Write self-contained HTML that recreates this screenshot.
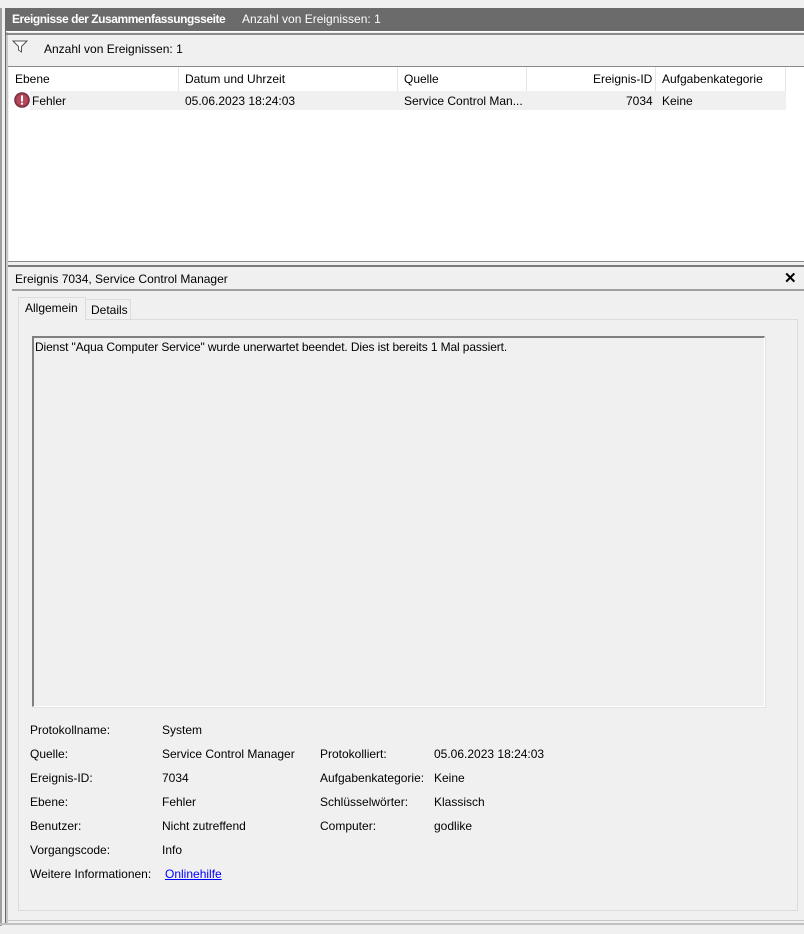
<!DOCTYPE html>
<html><head><meta charset="utf-8"><style>
*{margin:0;padding:0;box-sizing:border-box}
body{width:804px;height:934px;background:#f0f0f0;font-family:"Liberation Sans",sans-serif;font-size:12px;color:#000;position:relative;overflow:hidden}
.a{position:absolute;white-space:nowrap}
</style></head><body>
<div class="a" style="left:0;top:8px;width:2px;height:918px;background:#a0a0a0"></div>
<div class="a" style="left:5px;top:8px;width:1px;height:915px;background:#696969"></div>
<div class="a" style="left:6px;top:8px;width:2px;height:915px;background:#c8c8c8"></div>
<div class="a" style="left:6px;top:8px;width:798px;height:23px;background:#6b6b6b"></div>
<div class="a" style="left:12px;top:12px;color:#fff;font-weight:bold;font-size:12px;letter-spacing:-0.45px">Ereignisse der Zusammenfassungsseite</div>
<div class="a" style="left:242px;top:12px;color:#fff;font-size:12px">Anzahl von Ereignissen: 1</div>
<div class="a" style="left:6px;top:31px;width:798px;height:1px;background:#fff"></div>
<div class="a" style="left:6px;top:33px;width:798px;height:2px;background:#8a8a8a"></div>
<svg class="a" style="left:12px;top:40px" width="16" height="13" viewBox="0 0 16 13"><path d="M1 1H15L9.5 6.5V12L6.5 10V6.5Z" fill="#fff" stroke="#555" stroke-width="1"/></svg>
<div class="a" style="left:44px;top:42px">Anzahl von Ereignissen: 1</div>
<div class="a" style="left:8px;top:66px;width:796px;height:1px;background:#8a8a8a"></div>
<div class="a" style="left:9px;top:67px;width:795px;height:194px;background:#fff"></div>
<div class="a" style="left:178px;top:67px;width:1px;height:24px;background:#e5e5e5"></div>
<div class="a" style="left:397px;top:67px;width:1px;height:24px;background:#e5e5e5"></div>
<div class="a" style="left:526px;top:67px;width:1px;height:24px;background:#e5e5e5"></div>
<div class="a" style="left:655px;top:67px;width:1px;height:24px;background:#e5e5e5"></div>
<div class="a" style="left:785px;top:67px;width:1px;height:24px;background:#e5e5e5"></div>
<div class="a" style="left:15px;top:72px">Ebene</div>
<div class="a" style="left:185px;top:72px">Datum und Uhrzeit</div>
<div class="a" style="left:404px;top:72px">Quelle</div>
<div class="a" style="left:593px;top:72px">Ereignis-ID</div>
<div class="a" style="left:662px;top:72px">Aufgabenkategorie</div>
<div class="a" style="left:30px;top:91px;width:756px;height:19px;background:#f0f0f0"></div>
<svg class="a" style="left:14px;top:92px" width="16" height="16" viewBox="0 0 16 16"><circle cx="8" cy="8" r="7.3" fill="#9a3a4c" stroke="#6d2a3a" stroke-width="1"/><circle cx="8" cy="8" r="5.5" fill="#b8485c"/><rect x="7" y="3.5" width="2" height="6" fill="#fff"/><rect x="7" y="10.7" width="2" height="2" fill="#fff"/></svg>
<div class="a" style="left:32px;top:94px">Fehler</div>
<div class="a" style="left:185px;top:94px">05.06.2023 18:24:03</div>
<div class="a" style="left:404px;top:94px">Service Control Man...</div>
<div class="a" style="left:626px;top:94px">7034</div>
<div class="a" style="left:662px;top:94px">Keine</div>
<div class="a" style="left:8px;top:261px;width:796px;height:1px;background:#8a8a8a"></div>
<div class="a" style="left:8px;top:265px;width:796px;height:2px;background:#7a7a7a"></div>
<div class="a" style="left:15px;top:272px">Ereignis 7034, Service Control Manager</div>
<div class="a" style="left:784px;top:269px;font-weight:bold;font-size:15px">✕</div>
<div class="a" style="left:12px;top:289px;width:792px;height:2px;background:#a0a0a0"></div>
<div class="a" style="left:18px;top:319px;width:780px;height:592px;border:1px solid #dcdcdc;background:#f0f0f0"></div>
<div class="a" style="left:18px;top:297px;width:68px;height:23px;background:#f0f0f0;border:1px solid #dcdcdc;border-bottom:none"></div>
<div class="a" style="left:25px;top:301px">Allgemein</div>
<div class="a" style="left:86px;top:299px;width:45px;height:20px;border:1px solid #dcdcdc;border-bottom:none;border-left:none"></div>
<div class="a" style="left:91px;top:303px">Details</div>
<div class="a" style="left:32px;top:336px;width:733px;height:371px;border-top:2px solid #808080;border-left:2px solid #808080;border-right:1px solid #fff;border-bottom:1px solid #fff;box-shadow:1px 1px 0 #e3e3e3"></div>
<div class="a" style="left:35px;top:340px;letter-spacing:-0.12px">Dienst "Aqua Computer Service" wurde unerwartet beendet. Dies ist bereits 1 Mal passiert.</div>
<div class="a" style="left:30px;top:723px">Protokollname:</div><div class="a" style="left:162px;top:723px">System</div>
<div class="a" style="left:30px;top:747px">Quelle:</div><div class="a" style="left:162px;top:747px">Service Control Manager</div>
<div class="a" style="left:320px;top:747px">Protokolliert:</div><div class="a" style="left:434px;top:747px">05.06.2023 18:24:03</div>
<div class="a" style="left:30px;top:771px">Ereignis-ID:</div><div class="a" style="left:162px;top:771px">7034</div>
<div class="a" style="left:320px;top:771px">Aufgabenkategorie:</div><div class="a" style="left:434px;top:771px">Keine</div>
<div class="a" style="left:30px;top:795px">Ebene:</div><div class="a" style="left:162px;top:795px">Fehler</div>
<div class="a" style="left:320px;top:795px">Schlüsselwörter:</div><div class="a" style="left:434px;top:795px">Klassisch</div>
<div class="a" style="left:30px;top:819px">Benutzer:</div><div class="a" style="left:162px;top:819px">Nicht zutreffend</div>
<div class="a" style="left:320px;top:819px">Computer:</div><div class="a" style="left:434px;top:819px">godlike</div>
<div class="a" style="left:30px;top:843px">Vorgangscode:</div><div class="a" style="left:162px;top:843px">Info</div>
<div class="a" style="left:30px;top:867px">Weitere Informationen:</div><div class="a" style="left:165px;top:867px;color:#0000ff;text-decoration:underline">Onlinehilfe</div>
<div class="a" style="left:6px;top:920px;width:798px;height:1px;background:#c8c8c8"></div>
<div class="a" style="left:0;top:923px;width:804px;height:2px;background:#c0c0c0"></div>
</body></html>
